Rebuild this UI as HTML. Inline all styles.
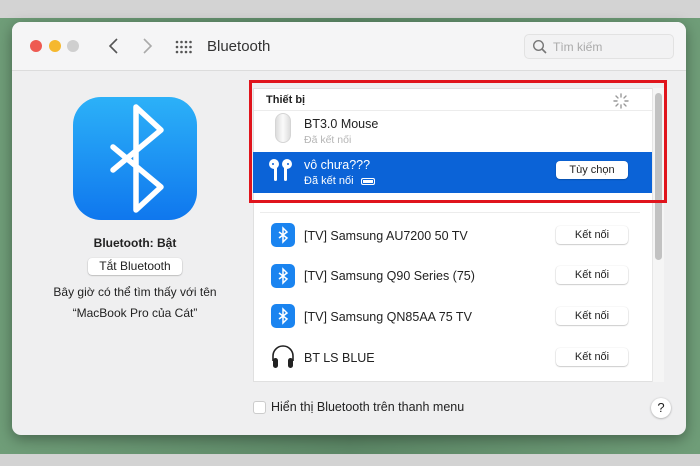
<!DOCTYPE html>
<html><head><meta charset="utf-8"><style>
*{margin:0;padding:0;box-sizing:border-box}
body{width:700px;height:466px;overflow:hidden;background:#5f8a68;font-family:"Liberation Sans",sans-serif;position:relative;color:#222}
.abs{position:absolute}
.t{position:absolute;white-space:nowrap}
.btn{position:absolute;background:#fff;border-radius:4px;box-shadow:0 0.5px 1.5px rgba(0,0,0,.35);font-size:11px;text-align:center;color:#222}
.n{font-size:12.5px}
</style></head><body>
<div class="abs" style="left:0;top:0;width:700px;height:18px;background:#d3d3d3"></div>
<div class="abs" style="left:0;top:18px;width:700px;height:437px;background:linear-gradient(90deg,#6f9d78,#5c8766 50%,#6f9d78)"></div>
<div class="abs" style="left:0;top:454px;width:700px;height:12px;background:#d3d3d3"></div>

<div class="abs" style="left:12px;top:22px;width:674px;height:413px;background:#efeff0;border-radius:9px;box-shadow:0 4px 14px rgba(0,0,0,.35)"></div>
<div class="abs" style="left:12px;top:22px;width:674px;height:49px;background:#f5f5f6;border-radius:9px 9px 0 0;border-bottom:1px solid #dcdcdc"></div>
<div class="abs" style="left:30px;top:40px;width:12px;height:12px;border-radius:50%;background:#ee5a52"></div>
<div class="abs" style="left:49px;top:40px;width:12px;height:12px;border-radius:50%;background:#f5b82e"></div>
<div class="abs" style="left:67px;top:40px;width:12px;height:12px;border-radius:50%;background:#cfcfcf"></div>
<svg class="abs" style="left:105px;top:37px" width="60" height="18"><path d="M12 2 L5 9 L12 16" fill="none" stroke="#555" stroke-width="1.6"/><path d="M39 2 L46 9 L39 16" fill="none" stroke="#aaa" stroke-width="1.6"/></svg>
<svg class="abs" style="left:175px;top:40px" width="18" height="14" fill="#555"><g><circle cx="2" cy="2" r="1.3"/><circle cx="6.5" cy="2" r="1.3"/><circle cx="11" cy="2" r="1.3"/><circle cx="15.5" cy="2" r="1.3"/><circle cx="2" cy="7" r="1.3"/><circle cx="6.5" cy="7" r="1.3"/><circle cx="11" cy="7" r="1.3"/><circle cx="15.5" cy="7" r="1.3"/><circle cx="2" cy="12" r="1.3"/><circle cx="6.5" cy="12" r="1.3"/><circle cx="11" cy="12" r="1.3"/><circle cx="15.5" cy="12" r="1.3"/></g></svg>
<div class="t" style="left:207px;top:38px;font-size:15px;color:#333">Bluetooth</div>
<div class="abs" style="left:524px;top:34px;width:150px;height:25px;background:#f2f2f3;border:1px solid #e2e2e2;border-radius:5px"></div>
<svg class="abs" style="left:532px;top:39px" width="16" height="16"><circle cx="6.5" cy="6.5" r="4.8" fill="none" stroke="#777" stroke-width="1.4"/><path d="M10 10 L14 14" stroke="#777" stroke-width="1.6"/></svg>
<div class="t" style="left:553px;top:40px;font-size:12px;color:#aaa">Tìm kiếm</div>

<div class="abs" style="left:73px;top:97px;width:124px;height:123px;border-radius:28px;background:linear-gradient(#2cb1f8,#0f77ee)"></div>
<svg class="abs" style="left:73px;top:97px" width="124" height="123"><path d="M40 50 L88 90 L63 113 L63 10 L88 33 L40 73" fill="none" stroke="#fff" stroke-width="5.5" stroke-linejoin="round" stroke-linecap="round"/></svg>
<div class="t" style="left:20px;width:230px;text-align:center;top:236px;font-size:12px;font-weight:bold">Bluetooth: Bật</div>
<div class="btn" style="left:88px;top:258px;width:94px;height:17px;line-height:17px;font-size:12px">Tắt Bluetooth</div>
<div class="t" style="left:20px;width:230px;text-align:center;top:285px;font-size:12px">Bây giờ có thể tìm thấy với tên</div>
<div class="t" style="left:20px;width:230px;text-align:center;top:306px;font-size:12px">“MacBook Pro của Cát”</div>

<div class="abs" style="left:253px;top:88px;width:411px;height:294px;background:#fff;border:1px solid #e0e0e0"></div>
<div class="abs" style="left:652px;top:88px;width:12px;height:294px;background:#f5f5f5;border-left:1px solid #e6e6e6"></div>
<div class="abs" style="left:655px;top:93px;width:7px;height:167px;background:#c2c2c2;border-radius:4px"></div>
<div class="t" style="left:266px;top:94px;font-size:11px;font-weight:bold">Thiết bị</div>
<svg class="abs" style="left:613px;top:93px" width="16" height="16" stroke="#999" stroke-width="1.4" stroke-linecap="round"><path d="M8 1v3M8 12v3M1 8h3M12 8h3M3 3l2 2M11 11l2 2M3 13l2-2M11 5l2-2"/></svg>
<div class="abs" style="left:254px;top:110px;width:398px;height:1px;background:#ececec"></div>
<div class="abs" style="left:275px;top:113px;width:16px;height:30px;border-radius:8px;background:linear-gradient(90deg,#ddd,#fafafa,#ddd);border:1px solid #d5d5d5"></div>
<div class="t n" style="left:304px;top:117px">BT3.0 Mouse</div>
<div class="t" style="left:304px;top:134px;font-size:10.5px;color:#b5b5b5">Đã kết nối</div>
<div class="abs" style="left:253px;top:152px;width:399px;height:41px;background:#0b63d7"></div>
<svg class="abs" style="left:266px;top:156px" width="30" height="30" fill="#fff"><circle cx="8" cy="8" r="5"/><rect x="8" y="9" width="3" height="16" rx="1.5"/><circle cx="21" cy="8" r="5"/><rect x="18" y="9" width="3" height="16" rx="1.5"/><circle cx="7" cy="8" r="1" fill="#0b63d7"/><circle cx="22" cy="8" r="1" fill="#0b63d7"/></svg>
<div class="t n" style="left:304px;top:158px;color:#fff">vô chưa???</div>
<div class="t" style="left:304px;top:175px;font-size:11px;color:#fff">Đã kết nối</div>
<div class="abs" style="left:361px;top:178px;width:14px;height:7px;border:1.5px solid #fff;border-radius:2px;background:#fff;box-shadow:inset 0 0 0 1px #0b63d7"></div>
<div class="btn" style="left:556px;top:161px;width:72px;height:18px;line-height:18px">Tùy chọn</div>
<div class="abs" style="left:249px;top:80px;width:418px;height:123px;border:3px solid #e0141c"></div>
<div class="abs" style="left:260px;top:212px;width:380px;height:1px;background:#ececec"></div>

<svg class="abs" style="left:271px;top:223px" width="24" height="24"><rect width="24" height="24" rx="5" fill="#1a84f0"/><path d="M8 9 L16 15 L12 19 L12 5 L16 9 L8 15" fill="none" stroke="#fff" stroke-width="1.5"/></svg>
<div class="t n" style="left:304px;top:229px">[TV] Samsung AU7200 50 TV</div>
<div class="btn" style="left:556px;top:226px;width:72px;height:18px;line-height:18px">Kết nối</div>
<svg class="abs" style="left:271px;top:264px" width="24" height="24"><rect width="24" height="24" rx="5" fill="#1a84f0"/><path d="M8 9 L16 15 L12 19 L12 5 L16 9 L8 15" fill="none" stroke="#fff" stroke-width="1.5"/></svg>
<div class="t n" style="left:304px;top:269px">[TV] Samsung Q90 Series (75)</div>
<div class="btn" style="left:556px;top:266px;width:72px;height:18px;line-height:18px">Kết nối</div>
<svg class="abs" style="left:271px;top:304px" width="24" height="24"><rect width="24" height="24" rx="5" fill="#1a84f0"/><path d="M8 9 L16 15 L12 19 L12 5 L16 9 L8 15" fill="none" stroke="#fff" stroke-width="1.5"/></svg>
<div class="t n" style="left:304px;top:310px">[TV] Samsung QN85AA 75 TV</div>
<div class="btn" style="left:556px;top:307px;width:72px;height:18px;line-height:18px">Kết nối</div>
<svg class="abs" style="left:270px;top:345px" width="26" height="24"><path d="M3 16 V11 A10 10 0 0 1 23 11 V16" fill="none" stroke="#222" stroke-width="1.6"/><rect x="3" y="13" width="5" height="10" rx="2.5" fill="#222"/><rect x="18" y="13" width="5" height="10" rx="2.5" fill="#222"/></svg>
<div class="t n" style="left:304px;top:351px">BT LS BLUE</div>
<div class="btn" style="left:556px;top:348px;width:72px;height:18px;line-height:18px">Kết nối</div>

<div class="abs" style="left:253px;top:401px;width:13px;height:13px;border:1px solid #ccc;border-radius:3px;background:#fff"></div>
<div class="t" style="left:271px;top:400px;font-size:12.5px">Hiển thị Bluetooth trên thanh menu</div>
<div class="abs" style="left:651px;top:398px;width:20px;height:20px;border-radius:50%;background:#fff;box-shadow:0 0.5px 2px rgba(0,0,0,.35);text-align:center;line-height:20px;font-size:13px">?</div>
</body></html>
